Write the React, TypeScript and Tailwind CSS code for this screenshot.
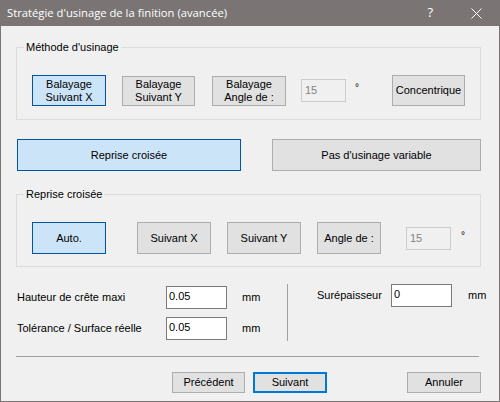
import { FC, ReactNode } from 'react';

const font = "font-['Liberation_Sans',Arial,sans-serif]";

interface BtnProps {
  children: ReactNode;
  className?: string;
  active?: boolean;
  focused?: boolean;
}

const Btn: FC<BtnProps> = ({ children, className = '', active, focused }) => {
  let look = 'border border-[#adadad] bg-[#e1e1e1]';
  if (active) look = 'border border-[#0054a0] bg-[#cce4f7]';
  if (focused) look = 'border-2 border-[#0078d7] bg-[#e1e1e1]';
  return (
    <button
      type="button"
      className={`flex shrink-0 flex-col items-center justify-center text-center text-[11px] leading-[13px] text-black ${look} ${className}`}
    >
      {children}
    </button>
  );
};

const AngleInput: FC<{ className?: string }> = ({ className = '' }) => (
  <div
    className={`flex h-[23px] w-[45px] shrink-0 items-start border border-[#cccccc] bg-[#f0f0f0] pl-[3px] pt-[2px] text-[11px] text-[#838383] ${className}`}
  >
    15
  </div>
);

const ValueInput: FC<{ value: string; className?: string }> = ({ value, className = '' }) => (
  <div
    className={`flex h-[23px] w-[61px] shrink-0 items-start border border-[#7a7a7a] bg-white pl-[2px] pt-[1px] text-[11px] text-black ${className}`}
  >
    {value}
  </div>
);

const Group: FC<{ title: string; className?: string; children: ReactNode }> = ({
  title,
  className = '',
  children,
}) => (
  <div className={`relative ml-[15px] w-[465px] border border-[#dcdcdc] ${className}`}>
    <span className="absolute -top-[7px] left-[7px] bg-[#f0f0f0] px-[2px] text-[11px] leading-[13px] text-black">
      {title}
    </span>
    {children}
  </div>
);

const App: FC = () => (
  <div
    className={`flex h-[402px] w-[500px] flex-col border-x border-b border-[#7a7574] bg-[#f0f0f0] ${font}`}
  >
    {/* barre de titre */}
    <div className="-mx-px flex h-[26px] shrink-0 items-center bg-[#7a7574] text-white">
      <span className="pl-[7px] font-['Open_Sans',sans-serif] text-[11.25px]">
        Stratégie d'usinage de la finition (avancée)
      </span>
      <span className="ml-auto mr-[38px] font-['Open_Sans',sans-serif] text-[13px]">?</span>
      <svg className="mr-[18px] h-[11px] w-[11px]" viewBox="0 0 11 11" fill="none">
        <path d="M0.5 0.5L10.5 10.5M10.5 0.5L0.5 10.5" stroke="white" strokeWidth="1" />
      </svg>
    </div>

    {/* méthode d'usinage */}
    <Group title="Méthode d'usinage" className="mt-[21px] pb-[13px] pt-[27px]">
      <div className="flex items-center">
        <Btn active className="ml-[15px] h-[31px] w-[74px]">
          <span>Balayage</span>
          <span>Suivant X</span>
        </Btn>
        <Btn className="ml-[16px] h-[30px] w-[73px]">
          <span>Balayage</span>
          <span>Suivant Y</span>
        </Btn>
        <Btn className="ml-[17px] h-[30px] w-[74px]">
          <span>Balayage</span>
          <span>Angle de :</span>
        </Btn>
        <AngleInput className="ml-[15px]" />
        <span className="w-[46px] shrink-0 pb-[6px] pl-[9px] text-[10px]">°</span>
        <Btn className="h-[31px] w-[73px]">Concentrique</Btn>
      </div>
    </Group>

    {/* boutons larges */}
    <div className="ml-[16px] mt-[19px] flex gap-[31px]">
      <Btn active className="h-[32px] w-[224px]">
        Reprise croisée
      </Btn>
      <Btn className="h-[32px] w-[209px]">Pas d'usinage variable</Btn>
    </div>

    {/* reprise croisée */}
    <Group title="Reprise croisée" className="mt-[23px] pb-[12px] pt-[27px]">
      <div className="flex items-center">
        <Btn active className="ml-[15px] h-[32px] w-[74px]">
          Auto.
        </Btn>
        <Btn className="ml-[31px] h-[32px] w-[74px]">Suivant X</Btn>
        <Btn className="ml-[16px] h-[32px] w-[74px]">Suivant Y</Btn>
        <Btn className="ml-[16px] h-[32px] w-[64px]">Angle de :</Btn>
        <AngleInput className="ml-[25px]" />
        <span className="pb-[6px] pl-[10px] text-[10px]">°</span>
      </div>
    </Group>

    {/* paramètres */}
    <div className="mt-[19px] flex">
      <div className="flex w-[286px] shrink-0 flex-col gap-[8px] pl-[16px]">
        <div className="flex items-center">
          <span className="w-[149px] text-[11px]">Hauteur de crête maxi</span>
          <ValueInput value="0.05" />
          <span className="ml-[15px] text-[11px]">mm</span>
        </div>
        <div className="flex items-center">
          <span className="w-[149px] text-[11px]">Tolérance / Surface réelle</span>
          <ValueInput value="0.05" />
          <span className="ml-[15px] text-[11px]">mm</span>
        </div>
      </div>
      <div className="-mt-[2px] h-[57px] w-px shrink-0 bg-[#a0a0a0]" />
      <div className="-mt-[2px] flex h-[23px] items-center">
        <span className="ml-[29px] w-[74px] text-[11px]">Surépaisseur</span>
        <ValueInput value="0" className="w-[60px]" />
        <span className="ml-[16px] text-[11px]">mm</span>
      </div>
    </div>

    <div className="ml-[15px] mt-[15px] h-px w-[463px] bg-[#a0a0a0]" />

    {/* navigation */}
    <div className="ml-[171px] mt-[15px] flex">
      <Btn className="h-[21px] w-[73px]">Précédent</Btn>
      <Btn focused className="ml-[8px] h-[21px] w-[74px]">
        Suivant
      </Btn>
      <Btn className="ml-[80px] h-[21px] w-[74px]">Annuler</Btn>
    </div>
  </div>
);

export default App;
